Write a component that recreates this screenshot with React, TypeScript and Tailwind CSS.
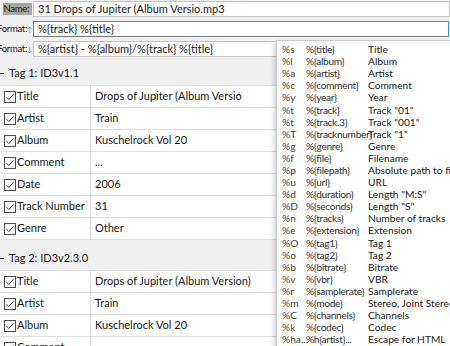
import React from 'react';

const font = "font-['Lato','Noto_Sans',sans-serif]";

const tag1 = [
  ['Title', 'Drops of Jupiter (Album Versio'],
  ['Artist', 'Train'],
  ['Album', 'Kuschelrock Vol 20'],
  ['Comment', '...'],
  ['Date', '2006'],
  ['Track Number', '31'],
  ['Genre', 'Other'],
];

const tag2 = [
  ['Title', 'Drops of Jupiter (Album Version)'],
  ['Artist', 'Train'],
  ['Album', 'Kuschelrock Vol 20'],
  ['Comment', ''],
];

const codes = [
  ['%s', '%{title}', 'Title'],
  ['%l', '%{album}', 'Album'],
  ['%a', '%{artist}', 'Artist'],
  ['%c', '%{comment}', 'Comment'],
  ['%y', '%{year}', 'Year'],
  ['%t', '%{track}', 'Track "01"'],
  ['%t', '%{track.3}', 'Track "001"'],
  ['%T', '%{tracknumber}', 'Track "1"'],
  ['%g', '%{genre}', 'Genre'],
  ['%f', '%{file}', 'Filename'],
  ['%p', '%{filepath}', 'Absolute path to file'],
  ['%u', '%{url}', 'URL'],
  ['%d', '%{duration}', 'Length "M:S"'],
  ['%D', '%{seconds}', 'Length "S"'],
  ['%n', '%{tracks}', 'Number of tracks'],
  ['%e', '%{extension}', 'Extension'],
  ['%O', '%{tag1}', 'Tag 1'],
  ['%o', '%{tag2}', 'Tag 2'],
  ['%b', '%{bitrate}', 'Bitrate'],
  ['%v', '%{vbr}', 'VBR'],
  ['%r', '%{samplerate}', 'Samplerate'],
  ['%m', '%{mode}', 'Stereo, Joint Stereo'],
  ['%C', '%{channels}', 'Channels'],
  ['%k', '%{codec}', 'Codec'],
  ['%ha...', '%h{artist}...', 'Escape for HTML'],
];

function Check() {
  return (
    <svg width="12" height="12" viewBox="0 0 12 12" className="shrink-0">
      <rect x="0.5" y="0.5" width="11" height="11" fill="#fff" stroke="#4d4d4d" />
      <path d="M2.5 6.2 L4.8 8.5 L9.5 3.3" fill="none" stroke="#333" strokeWidth="1" />
    </svg>
  );
}

function FormRow({ label, arrow, active, selected, text }: { label: string; arrow?: string; active?: boolean; selected?: boolean; text: string }) {
  return (
    <div className="flex h-4 items-center">
      <div className="flex w-[32px] shrink-0 justify-end overflow-hidden">
        <span className={`whitespace-nowrap text-[9.5px] leading-[12px] tracking-[-0.3px] ${selected ? 'bg-[#a6a6a6] pr-[3px]' : ''}`}>
          {label}
          {arrow && <span className="text-[7px] text-[#6d7f99]">{arrow}</span>}
        </span>
      </div>
      <div
        className={`ml-px flex h-4 flex-1 items-center border bg-white pl-1 whitespace-nowrap ${
          active ? 'mr-px border-[#7a7a7a] border-r-[#3d8ee0]' : 'border-[#c4c4c4]'
        }`}
      >
        {text}
      </div>
    </div>
  );
}

function TagSection({ title, rows }: { title: string; rows: string[][] }) {
  return (
    <div>
      <div className="flex h-6 items-center">
        <span className="h-px w-[4px] bg-[#333]" />
        <span className="ml-[5px]">{title}</span>
      </div>
      <div className="border-t border-[#dedede] bg-white">
        {rows.map(([k, v], i) => (
          <div key={i} className="flex h-[22px] border-b border-[#dedede] whitespace-nowrap">
            <div className="flex w-[91px] items-center gap-[1px] border-r border-[#dedede] pl-1">
              <Check />
              <span>{k}</span>
            </div>
            <div className="flex flex-1 items-center pl-[4px]">{v}</div>
          </div>
        ))}
      </div>
    </div>
  );
}

export default function App() {
  return (
    <div className={`relative h-[346px] w-[450px] overflow-hidden bg-[#f0f0f0] text-[11px] text-[#1a1a1a] ${font}`}>
      <div className="flex flex-col gap-1 pt-px">
        <FormRow label="Name:" selected text="31 Drops of Jupiter (Album Versio.mp3" />
        <FormRow label="Format:" arrow="↑" active text="%{track} %{title}" />
        <FormRow label="Format:" arrow="↓" text="%{artist} - %{album}/%{track} %{title}" />
      </div>

      <div className="mt-[4px]">
        <TagSection title="Tag 1: ID3v1.1" rows={tag1} />
      </div>
      <div className="mt-[6px]">
        <TagSection title="Tag 2: ID3v2.3.0" rows={tag2} />
      </div>

      {/* format code dropdown */}
      <div className="absolute left-[276px] top-[40px] w-[200px] border border-[#cccccc] bg-white py-[2px] text-[10.2px] shadow-[-2px_2px_4px_rgba(0,0,0,0.18)]">
        {codes.map(([c, n, d], i) => (
          <div key={i} className="flex h-[12.1px] items-center whitespace-nowrap leading-[12px]">
            <span className="w-[29px] shrink-0 pl-[5px] text-[#444]">{c}</span>
            <span className="w-[62px] shrink-0 tracking-[-0.35px] text-[#333]">{n}</span>
            <span>{d}</span>
          </div>
        ))}
      </div>
    </div>
  );
}
